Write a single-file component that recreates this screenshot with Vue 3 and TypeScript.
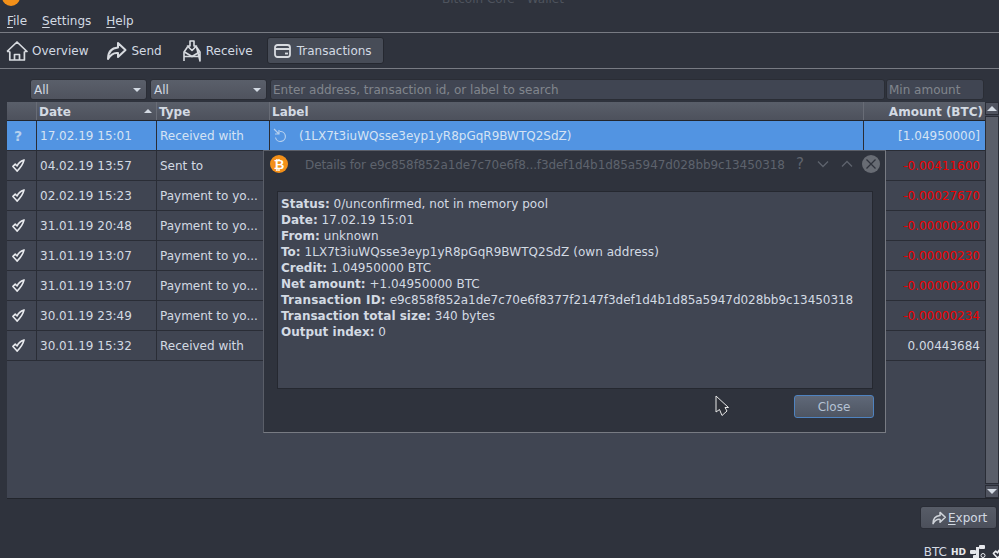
<template>
  <div class="window">
    <div class="titlebar">
      <span class="title-logo"></span>
      <span class="title-text">Bitcoin Core - Wallet</span>
    </div>

    <div class="menubar">
      <span class="menu"><u>F</u>ile</span>
      <span class="menu"><u>S</u>ettings</span>
      <span class="menu"><u>H</u>elp</span>
    </div>

    <div class="toolbar">
      <div class="tool">
        <svg width="22" height="22" viewBox="0 0 22 22" fill="none" stroke="#d8dbe0" stroke-width="1.700">
          <path d="M1 11.500 11 2l10 9.500h-2.600M3.800 11.500V20h14.600v-8.500M8.500 20v-5.500h5V20M1 11.500h2.800" stroke-linejoin="round" />
        </svg>
        <span>Overview</span>
      </div>
      <div class="tool send">
        <svg width="21" height="20" viewBox="0 0 21 20" fill="none" stroke="#d8dbe0" stroke-width="2">
          <path d="M12 2l7.500 7-7.500 7v-4C8 11.500 4.500 13.500 2 18c0-7 3.500-11 10-11.500z" stroke-linejoin="round" />
        </svg>
        <span>Send</span>
      </div>
      <div class="tool receive">
        <svg width="18" height="22" viewBox="0 0 18 22" fill="none" stroke="#d8dbe0" stroke-width="1.600">
          <path d="M1 21V12l3.500-5M13.500 7 17 12v9zM1 16.500h16" stroke-linejoin="round" />
          <path d="M7 1h4v5h2.500L9 10.500 4.500 6H7z" stroke-linejoin="round" />
          <path d="M1.500 12 9 16.500l7.500-4.500" />
        </svg>
        <span>Receive</span>
      </div>
      <div class="tool active">
        <svg width="17" height="14" viewBox="0 0 17 14" fill="none" stroke="#d8dbe0" stroke-width="1.800">
          <rect x="1" y="1" width="15" height="12" rx="2.500" />
          <path d="M1 5h15" stroke-width="2" />
          <path d="M11 9.500h3" />
        </svg>
        <span>Transactions</span>
      </div>
    </div>

    <div class="content">
      <div class="filters">
        <div class="combo">All<i class="arrow"></i></div>
        <div class="combo">All<i class="arrow"></i></div>
        <div class="field search">Enter address, transaction id, or label to search</div>
        <div class="field amount-field">Min amount</div>
      </div>

      <div class="table-wrap">
        <div class="table">
          <div class="row head">
            <div class="cell c-status"></div>
            <div class="cell c-date">Date<i class="sort"></i></div>
            <div class="cell c-type">Type</div>
            <div class="cell c-label">Label</div>
            <div class="cell c-amount">Amount (BTC)</div>
          </div>
          <div v-for="(tx, i) in transactions" :key="i" class="row" :class="{ selected: tx.pending }">
            <div class="cell c-status">
              <span v-if="tx.pending" class="question">?</span>
              <svg v-else width="13" height="13" viewBox="0 0 14 14" fill="none" stroke="#e8eaee" stroke-width="1.700">
                <path d="M1 8 3.500 5.500 5.500 7.500C6.500 5 8.500 2.500 13 1 12 5.500 9 9.500 5.500 13z" stroke-linejoin="round" />
              </svg>
            </div>
            <div class="cell c-date">{{ tx.date }}</div>
            <div class="cell c-type">{{ tx.type }}</div>
            <div class="cell c-label">
              <template v-if="tx.pending">
                <svg class="recv-icon" width="15" height="15" viewBox="0 0 15 15" fill="none" stroke="#b6d0ee" stroke-width="1.200">
                  <path d="M1 1l5 5M2 6h4V2" />
                  <path d="M7 3.500a5 5 0 1 1-4.500 6" />
                </svg>
                <span>{{ tx.label }}</span>
              </template>
            </div>
            <div class="cell c-amount" :class="{ negative: tx.amount.startsWith('-') }">{{ tx.amount }}</div>
          </div>
        </div>
        <div class="scrollbar">
          <div class="scroll-btn"><i class="up"></i></div>
          <div class="scroll-thumb"></div>
          <div class="scroll-btn"><i class="down"></i></div>
        </div>
      </div>

      <div class="actions">
        <div class="export">
          <svg width="16" height="14" viewBox="0 0 21 20" fill="none" stroke="#d0d4da" stroke-width="2.200">
            <path d="M12 2l7.500 7-7.500 7v-4C8 11.500 4.500 13.500 2 18c0-7 3.500-11 10-11.500z" stroke-linejoin="round" />
          </svg>
          <span><u>E</u>xport</span>
        </div>
      </div>

      <div class="statusbar">
        <span>BTC</span>
        <b class="hd">HD</b>
        <svg class="net" width="16" height="14" viewBox="0 0 16 14" fill="#e6e8ec">
          <rect x="0" y="5" width="6" height="4" rx="1" />
          <rect x="6" y="2" width="3" height="10" />
          <rect x="9" y="0" width="6" height="4" rx="1" />
          <rect x="3" y="10" width="6" height="4" rx="1" />
          <circle cx="13" cy="10.500" r="2" fill="none" stroke="#e6e8ec" />
        </svg>
        <svg width="14" height="13" viewBox="0 0 14 14" fill="none" stroke="#e8eaee" stroke-width="1.700">
          <path d="M1 8 3.500 5.500 5.500 7.500C6.500 5 8.500 2.500 13 1 12 5.500 9 9.500 5.500 13z" stroke-linejoin="round" />
        </svg>
      </div>
    </div>

    <!-- details dialog floats over the table -->
    <div class="dialog">
      <div class="dialog-title">
        <svg class="dialog-logo" width="18" height="18" viewBox="0 0 18 18">
          <circle cx="9" cy="9" r="9" fill="#f39019" />
          <text x="9" y="13.500" text-anchor="middle" class="logo-b">₿</text>
        </svg>
        <span class="dialog-caption">Details for e9c858f852a1de7c70e6f8...f3def1d4b1d85a5947d028bb9c13450318</span>
        <span class="win-help">?</span>
        <svg class="win-btn first" width="12" height="8" viewBox="0 0 12 8" fill="none" stroke="#5e636d" stroke-width="1.300"><path d="M1 1.500l5 5 5-5" /></svg>
        <svg class="win-btn" width="12" height="8" viewBox="0 0 12 8" fill="none" stroke="#5e636d" stroke-width="1.300"><path d="M1 6.500l5-5 5 5" /></svg>
        <svg class="win-close" width="18" height="18" viewBox="0 0 18 18">
          <circle cx="9" cy="9" r="9" fill="#686c74" />
          <path d="M4.500 4.500l9 9M13.500 4.500l-9 9" stroke="#2f333d" stroke-width="1.300" />
        </svg>
      </div>
      <div class="details">
        <div v-for="line in detailLines" :key="line.name" :class="{ 'tx-id': line.name === 'Transaction ID' }">
          <b>{{ line.name }}:</b> <span class="value">{{ line.value }}</span>
        </div>
      </div>
      <div class="dialog-foot">
        <div class="close-btn">Close</div>
      </div>
    </div>

    <!-- mouse pointer -->
    <svg class="pointer" width="14" height="22" viewBox="0 0 14 22">
      <path d="M1 1v16l3.500-2.500L7 20.500l5-4.500-2-3.500h3.500z" fill="#2d3038" stroke="#e8e8e8" stroke-width="1" />
    </svg>
  </div>
</template>

<script setup lang="ts">
interface Tx {
  date: string;
  type: string;
  label?: string;
  amount: string;
  pending?: boolean;
}

const transactions: Tx[] = [
  { date: '17.02.19 15:01', type: 'Received with', label: '(1LX7t3iuWQsse3eyp1yR8pGqR9BWTQ2SdZ)', amount: '[1.04950000]', pending: true },
  { date: '04.02.19 13:57', type: 'Sent to', amount: '-0.00411600' },
  { date: '02.02.19 15:23', type: 'Payment to yo...', amount: '-0.00027670' },
  { date: '31.01.19 20:48', type: 'Payment to yo...', amount: '-0.00000200' },
  { date: '31.01.19 13:07', type: 'Payment to yo...', amount: '-0.00000230' },
  { date: '31.01.19 13:07', type: 'Payment to yo...', amount: '-0.00000200' },
  { date: '30.01.19 23:49', type: 'Payment to yo...', amount: '-0.00000234' },
  { date: '30.01.19 15:32', type: 'Received with', amount: '0.00443684' }
];

const detailLines = [
  { name: 'Status', value: '0/unconfirmed, not in memory pool' },
  { name: 'Date', value: '17.02.19 15:01' },
  { name: 'From', value: 'unknown' },
  { name: 'To', value: '1LX7t3iuWQsse3eyp1yR8pGqR9BWTQ2SdZ (own address)' },
  { name: 'Credit', value: '1.04950000 BTC' },
  { name: 'Net amount', value: '+1.04950000 BTC' },
  { name: 'Transaction ID', value: 'e9c858f852a1de7c70e6f8377f2147f3def1d4b1d85a5947d028bb9c13450318' },
  { name: 'Transaction total size', value: '340 bytes' },
  { name: 'Output index', value: '0' }
];
</script>

<style>
html,
body {
  margin: 0;
  background: #2f333d;
}
</style>

<style scoped>
.window {
  position: relative;
  width: 999px;
  height: 558px;
  overflow: hidden;
  background: #2f333d;
  color: #d3dae3;
  font-family: "DejaVu Sans", sans-serif;
  font-size: 12px;
}

/* title bar, mostly cut off by the top of the shot */
.titlebar {
  position: relative;
  height: 6px;
  overflow: hidden;
}
.title-logo {
  position: absolute;
  left: 2px;
  top: -12px;
  width: 18px;
  height: 18px;
  border-radius: 50%;
  background: #f39019;
}
.title-text {
  position: absolute;
  left: 442px;
  top: -8px;
  color: #4e535d;
}

.menubar {
  display: flex;
  align-items: center;
  gap: 15px;
  height: 27px;
  padding-left: 7px;
  padding-top: 4px;
  box-sizing: border-box;
  border-bottom: 1px solid #787b83;
}
.menu u,
.export u {
  text-underline-offset: 2px;
}

.toolbar {
  display: flex;
  align-items: center;
  height: 36px;
  padding-left: 6px;
  box-sizing: border-box;
  border-bottom: 1px solid #787b83;
}
.tool {
  display: flex;
  align-items: center;
  gap: 4px;
  height: 27px;
}
.tool svg {
  flex: none;
}
.send {
  margin-left: 17px;
}
.send span {
  margin-left: 1px;
}
.receive {
  margin-left: 21px;
  gap: 5px;
}
.active {
  margin-left: 14px;
  width: 117px;
  padding-left: 6px;
  gap: 6px;
  background: #474c57;
  border: 1px solid #252830;
  border-radius: 3px;
  box-sizing: border-box;
}

.content {
  padding-top: 10px;
}

.filters {
  display: flex;
  height: 21px;
  padding-left: 30px;
  padding-right: 15px;
}
.combo {
  position: relative;
  width: 117px;
  height: 21px;
  margin-right: 3px;
  line-height: 20px;
  padding-left: 3px;
  box-sizing: border-box;
  background: linear-gradient(#5a5f6a, #4f535e);
  border: 1px solid #2a2d35;
  border-radius: 3px;
}
.arrow {
  position: absolute;
  right: 5px;
  top: 8px;
  border-left: 4px solid transparent;
  border-right: 4px solid transparent;
  border-top: 4px solid #d3dae3;
}
.field {
  height: 21px;
  line-height: 20px;
  padding-left: 2px;
  box-sizing: border-box;
  background: #404552;
  border: 1px solid #2a2d35;
  border-radius: 3px;
  color: #81858d;
}
.search {
  flex: 1;
  margin-right: 1px;
}
.amount-field {
  width: 98px;
}

.table-wrap {
  display: flex;
  width: 992px;
  height: 397px;
  margin: 2px 0 0 7px;
  background: #404552;
  border-bottom: 1px solid #22252c;
  box-sizing: border-box;
}
.table {
  width: 978px;
}
.row {
  display: flex;
  height: 30px;
  border-bottom: 1px solid #2a2d36;
  box-sizing: border-box;
}
.row.head {
  height: 19px;
  background: linear-gradient(#5a5f6a, #4d515c);
  font-weight: bold;
  border-bottom: 1px solid #22252c;
  line-height: 18px;
}
.cell {
  display: flex;
  align-items: center;
  box-sizing: border-box;
  border-right: 1px solid #2a2d36;
  padding-left: 3px;
  overflow: hidden;
  white-space: nowrap;
}
.head .cell {
  border-right-color: #686c76;
  padding-left: 2px;
  padding-top: 2px;
}
.c-status {
  width: 30px;
  padding-left: 5px;
}
.c-date {
  width: 120px;
  position: relative;
}
.c-type {
  width: 113px;
}
.c-label {
  width: 594px;
}
.c-amount {
  width: 120px;
  justify-content: flex-end;
  padding-right: 4px;
  border-right: 0;
}
.head .c-amount {
  padding-right: 1px;
}
.negative {
  color: #f00000;
}
.sort {
  position: absolute;
  right: 4px;
  top: 7px;
  border-left: 4px solid transparent;
  border-right: 4px solid transparent;
  border-bottom: 4px solid #d3dae3;
}
.selected {
  background: #5294e2;
  color: #d5e3f4;
}
.question {
  margin-left: 2px;
  color: #b6d0ee;
  font-size: 14px;
  font-weight: bold;
}
.recv-icon {
  margin-right: 11px;
  flex: none;
}

.scrollbar {
  display: flex;
  flex-direction: column;
  width: 14px;
  gap: 1px;
}
.scroll-btn {
  position: relative;
  flex: none;
  height: 13px;
  background: #505460;
  border: 1px solid #2a2d36;
  box-sizing: border-box;
}
.scroll-thumb {
  flex: 1;
  background: #5a5e69;
  border: 1px solid #2a2d36;
  box-sizing: border-box;
}
.up,
.down {
  position: absolute;
  left: 1px;
  top: 3px;
  border-left: 5px solid transparent;
  border-right: 5px solid transparent;
}
.up {
  border-bottom: 5px solid #d3dae3;
}
.down {
  border-top: 5px solid #d3dae3;
}

.actions {
  display: flex;
  justify-content: flex-end;
  padding: 7px 2px 0 0;
}
.export {
  display: flex;
  align-items: center;
  gap: 1px;
  width: 77px;
  height: 23px;
  box-sizing: border-box;
  padding-left: 10px;
  background: linear-gradient(#575c67, #4c505b);
  border: 1px solid #2a2d36;
  border-radius: 3px;
}

.statusbar {
  display: flex;
  align-items: center;
  justify-content: flex-end;
  height: 16px;
  margin-top: 15px;
  margin-right: -7px;
}
.hd {
  margin: 0 4px;
  font-size: 9px;
  color: #e6e8ec;
}
.net {
  margin-right: 6px;
}

.dialog {
  position: absolute;
  left: 263px;
  top: 150px;
  width: 623px;
  height: 283px;
  box-sizing: border-box;
  background: #2f333d;
  border: 1px solid #787b83;
  border-left-color: #5a5e68;
  border-top-color: #5a5e68;
  display: flex;
  flex-direction: column;
}
.dialog-title {
  display: flex;
  align-items: center;
  height: 26px;
  padding-left: 6px;
  flex: none;
}
.dialog-logo {
  flex: none;
}
.logo-b {
  font-size: 13px;
  font-weight: bold;
  fill: #fff;
}
.dialog-caption {
  margin-left: 17px;
  padding-top: 2px;
  color: #5e636d;
  white-space: nowrap;
  letter-spacing: -0.09px;
}
.win-help {
  margin-left: 11px;
  color: #5e636d;
  font-size: 15px;
}
.win-btn {
  margin-left: 12px;
}
.win-btn.first {
  margin-left: 13px;
}
.win-close {
  margin-left: 9px;
}
.details {
  margin: 14px 12px 0 13px;
  height: 198px;
  flex: none;
  box-sizing: border-box;
  padding: 4px 3px;
  background: #404552;
  border: 1px solid #252830;
  line-height: 16px;
  color: #d3dae3;
}
.value {
  letter-spacing: 0.05px;
}
.tx-id b {
  letter-spacing: 0.2px;
}
.tx-id .value {
  letter-spacing: -0.05px;
}
.dialog-foot {
  display: flex;
  justify-content: flex-end;
  padding: 6px 11px 0 0;
}
.close-btn {
  width: 80px;
  height: 23px;
  line-height: 22px;
  text-align: center;
  box-sizing: border-box;
  background: linear-gradient(#5f6878, #4e5562);
  border: 1px solid #4f83c0;
  border-radius: 3px;
  color: #b4c2d4;
}

.pointer {
  position: absolute;
  left: 715px;
  top: 395px;
}
</style>
